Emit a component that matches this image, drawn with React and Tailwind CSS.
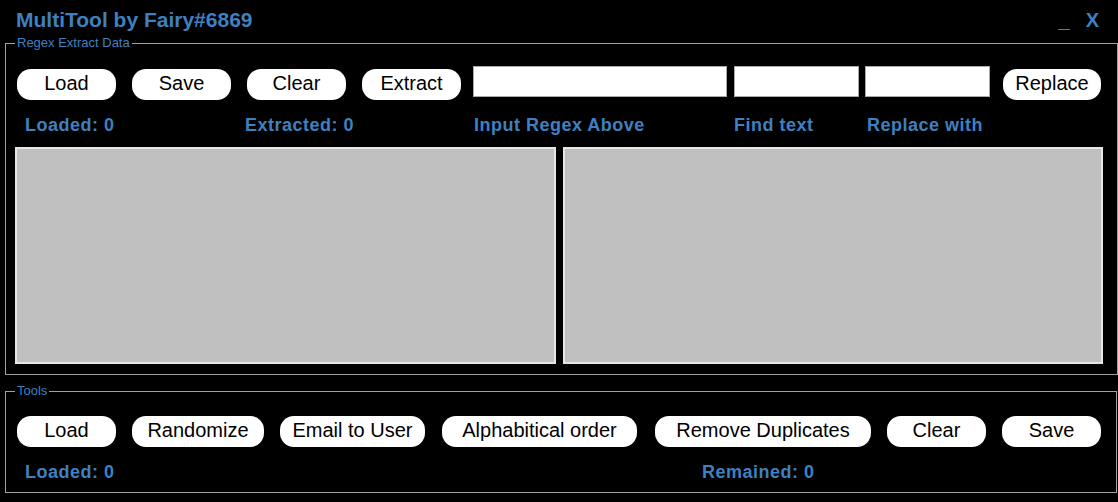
import React from 'react';

const blue = 'text-[#3f80c0]';

const Btn = ({ children, w }) => (
    <button
        className={`h-[31px] rounded-[14px] bg-white text-black text-[20px] leading-none pb-[3px] flex items-center justify-center shrink-0 ${w}`}
    >
        {children}
    </button>
);

const Box = ({ w }) => (
    <div className={`h-[31px] bg-white border border-[#a9a9a9] shrink-0 ${w}`} />
);

const Group = ({ title, children, className }) => (
    <fieldset className={`border border-[#a0a0a0] ml-[5px] mr-[1px] ${className}`}>
        <legend className={`-ml-[2px] px-[2px] text-[13px] leading-[14px] ${blue}`}>{title}</legend>
        {children}
    </fieldset>
);

export default function App() {
    return (
        <div
            className="w-[1118px] h-[502px] bg-black overflow-hidden flex flex-col"
            style={{ fontFamily: '"Liberation Sans", Arial, sans-serif' }}
        >
            {/* Title bar */}
            <div className="h-[36px] flex items-start pl-[16px] pr-[19px] pt-[8px]">
                <span className={`font-bold text-[21px] leading-[24px] ${blue}`}>MultiTool by Fairy#6869</span>
                <span className={`ml-auto font-bold text-[20px] leading-[24px] ${blue}`}>_</span>
                <span className={`ml-[16px] font-bold text-[20px] leading-[24px] ${blue}`}>X</span>
            </div>

            {/* Regex Extract Data */}
            <Group title="Regex Extract Data" className="h-[339px] pl-[11px] pr-[14px] pt-[16px]">
                <div className="flex items-start">
                    <Btn w="w-[99px] mt-[3px]">Load</Btn>
                    <Btn w="w-[99px] ml-[16px] mt-[3px]">Save</Btn>
                    <Btn w="w-[99px] ml-[16px] mt-[3px]">Clear</Btn>
                    <Btn w="w-[99px] ml-[16px] mt-[3px]">Extract</Btn>
                    <div className="ml-[12px]"><Box w="w-[254px]" /></div>
                    <div className="ml-[7px]"><Box w="w-[125px]" /></div>
                    <div className="ml-[6px]"><Box w="w-[125px]" /></div>
                    <Btn w="w-[98px] ml-[13px] mt-[3px]">Replace</Btn>
                </div>
                <div className={`flex font-bold text-[18px] tracking-[0.5px] leading-[20px] mt-[15px] ${blue}`}>
                    <span className="w-[220px] ml-[8px]">Loaded: 0</span>
                    <span className="w-[229px]">Extracted: 0</span>
                    <span className="w-[260px]">Input Regex Above</span>
                    <span className="w-[133px]">Find text</span>
                    <span>Replace with</span>
                </div>
                <div className="flex gap-[7px] mt-[12px] -ml-[2px]">
                    <div className="w-[541px] h-[217px] bg-[#c0c0c0] border-2 border-[#e6e6e6]" />
                    <div className="w-[540px] h-[217px] bg-[#c0c0c0] border-2 border-[#e6e6e6]" />
                </div>
            </Group>

            {/* Tools */}
            <Group title="Tools" className="mt-[9px] h-[109px] pl-[11px] pt-[18px]">
                <div className="flex items-start">
                    <Btn w="w-[99px]">Load</Btn>
                    <Btn w="w-[132px] ml-[16px]">Randomize</Btn>
                    <Btn w="w-[145px] ml-[16px]">Email to User</Btn>
                    <Btn w="w-[195px] ml-[17px]">Alphabitical order</Btn>
                    <Btn w="w-[216px] ml-[18px]">Remove Duplicates</Btn>
                    <Btn w="w-[99px] ml-[16px]">Clear</Btn>
                    <Btn w="w-[99px] ml-[16px]">Save</Btn>
                </div>
                <div className={`flex font-bold text-[18px] tracking-[0.5px] leading-[20px] mt-[15px] ${blue}`}>
                    <span className="w-[677px] ml-[8px]">Loaded: 0</span>
                    <span>Remained: 0</span>
                </div>
            </Group>
        </div>
    );
}
